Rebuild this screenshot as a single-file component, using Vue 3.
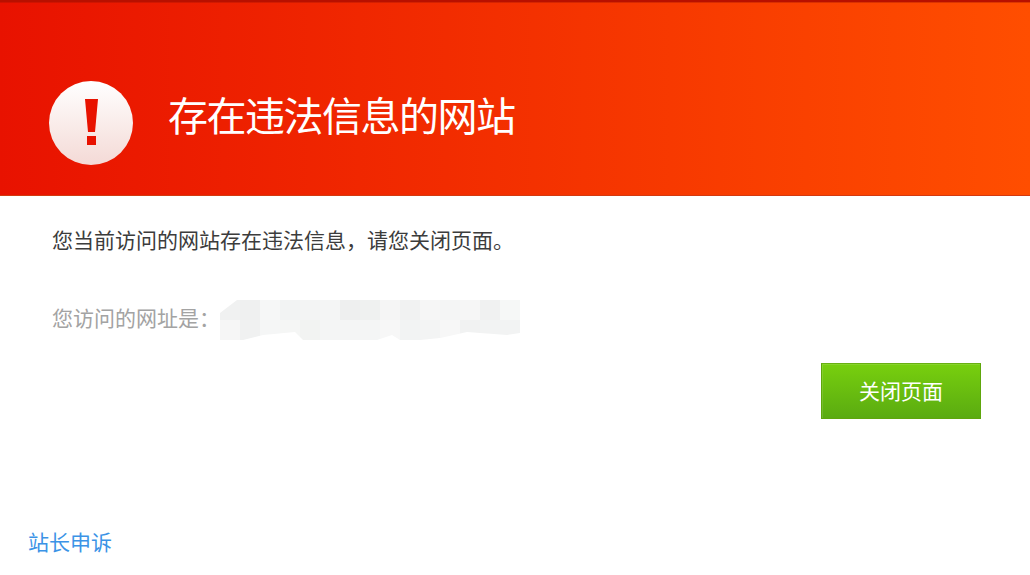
<template>
  <div class="page">
    <!-- Red warning banner -->
    <header class="banner">
      <svg class="warn-icon" width="86" height="86" viewBox="0 0 86 86">
        <defs>
          <linearGradient id="warnFill" x1="0" y1="0" x2="0" y2="1">
            <stop offset="0" stop-color="#ffffff" />
            <stop offset="1" stop-color="#f4dad6" />
          </linearGradient>
        </defs>
        <circle cx="43" cy="43" r="42" fill="url(#warnFill)" />
        <path d="M37 19h13l-3 33h-7z" fill="#e81200" />
        <rect x="39" y="56" width="9" height="9" fill="#e81200" />
      </svg>
      <h1 class="title">存在违法信息的网站</h1>
    </header>

    <main class="content">
      <p class="notice">您当前访问的网站存在违法信息，请您关闭页面。</p>
      <div class="url-row">
        <span class="url-label">您访问的网址是：</span>
        <div class="mosaic">
          <i v-for="(c, i) in cells" :key="i" :style="{ background: c }"></i>
        </div>
      </div>
      <div class="actions">
        <button class="close-btn">关闭页面</button>
      </div>
    </main>

    <footer class="footer">
      <a class="appeal" href="#">站长申诉</a>
    </footer>
  </div>
</template>

<script setup>
// the blurred out address, two rows of pale squares
const cells = [
  '#f0f1f1', '#eff0f0', '#f6f7f7', '#f2f3f3', '#f3f4f4', '#f4f5f5', '#eeefef', '#eff1f0',
  '#f5f5f5', '#f1f2f2', '#f6f6f6', '#f4f5f5', '#f6f6f6', '#f0f1f1', '#f6f8f7',
  '#f6f6f6', '#f0f1f1', '#f5f6f6', '#f5f6f5', '#f2f3f2', '#f4f5f5', '#f4f5f5', '#f4f5f5',
  '#f7f7f7', '#f2f3f3', '#f3f4f4', '#f7f7f7', '#f1f2f2', '#f2f3f3', '#f2f3f3'
]
</script>

<style>
html,
body {
  margin: 0;
  background: #fff;
}
</style>

<style scoped>
.page {
  width: 1030px;
  height: 575px;
  overflow: hidden;
  font-family: "Liberation Sans", "Noto Sans CJK SC", sans-serif;
  font-size: 21px;
}

.banner {
  box-sizing: border-box;
  height: 196px;
  display: flex;
  align-items: center;
  padding: 48px 0 0 48px;
  background: linear-gradient(to right, #e81200, #ff4e00);
  border-top: 2px solid #b81000;
  border-bottom: 1px solid #d23a10;
  box-shadow: inset 0 1px 0 rgba(160, 16, 0, 0.35);
}

.warn-icon {
  flex: none;
}

.title {
  margin: -12px 0 0 34px;
  font-size: 40px;
  font-weight: 400;
  letter-spacing: -1.5px;
  line-height: 50px;
  color: #fff;
}

.content {
  padding: 0 49px 0 52px;
}

.notice {
  margin: 0;
  padding-top: 29px;
  line-height: 32px;
  color: #3c3c3c;
}

.url-row {
  display: flex;
  margin-top: 43px;
  height: 40px;
  color: #a3a3a3;
}

.url-label {
  flex: none;
  width: 168px;
  line-height: 38px;
  white-space: nowrap;
}

.mosaic {
  display: grid;
  grid-template-columns: repeat(15, 20px);
  grid-auto-rows: 20px;
  clip-path: polygon(0 13px, 17px 0, 300px 0, 300px 33px, 287px 35px, 247px 32px, 220px 38px, 200px 40px, 180px 40px, 172px 35px, 157px 40px, 83px 40px, 75px 32px, 43px 35px, 23px 40px, 0 40px);
}

.actions {
  display: flex;
  justify-content: flex-end;
  margin-top: 23px;
}

.close-btn {
  width: 160px;
  height: 56px;
  padding: 0 0 3px;
  border: 1px solid #5ea60c;
  border-top-color: #69b012;
  background: linear-gradient(to bottom, #78cf0e, #5aab11);
  box-shadow: inset 1px 1px 0 rgba(255, 255, 255, 0.12);
  font: inherit;
  color: #fff;
  cursor: pointer;
}

.footer {
  padding: 108px 0 0 29px;
}

.appeal {
  margin-left: -1px;
  line-height: 32px;
  color: #3b93e6;
  text-decoration: none;
}
</style>
